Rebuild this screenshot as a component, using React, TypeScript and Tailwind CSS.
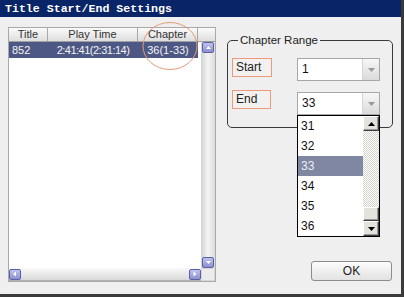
import React from "react";

const font = { fontFamily: '"Liberation Sans", Arial, sans-serif' };

function BlueBtn({ dir }: { dir: "up" | "down" | "left" | "right" }) {
  const pts: Record<string, string> = {
    up: "1,4 3.5,1 6,4",
    down: "1,1 3.5,4 6,1",
    left: "4,0.5 1,3 4,5.5",
    right: "1.5,0.5 4.5,3 1.5,5.5",
  };
  const w = dir === "up" || dir === "down" ? 7 : 6;
  const h = dir === "up" || dir === "down" ? 5 : 6;
  return (
    <div className="w-[12px] h-[11px] rounded-[2px] border border-[#5a60a3] bg-linear-to-b from-[#c0c3ee] to-[#8b90d0] flex items-center justify-center shrink-0">
      <svg width={w} height={h} viewBox={`0 0 ${w} ${h}`}>
        <polygon points={pts[dir]} fill="#ffffff" />
      </svg>
    </div>
  );
}

function ClassicBtn({ dir }: { dir: "up" | "down" }) {
  return (
    <div className="h-[15px] w-full bg-[#e4e2dc] border-r border-b border-[#404040] border-t border-l border-t-white border-l-white shadow-[inset_-1px_-1px_#9a9a9a] flex items-center justify-center">
      <svg width="7" height="4" viewBox="0 0 7 4">
        {dir === "up" ? (
          <polygon points="3.5,0 7,4 0,4" fill="#000" />
        ) : (
          <polygon points="0,0 7,0 3.5,4" fill="#000" />
        )}
      </svg>
    </div>
  );
}

function Combo({ value, children }: { value: string; children?: React.ReactNode }) {
  return (
    <div className="relative w-[83px] h-[23px] border border-[#a7a7a7] bg-white flex">
      <div className="flex-1 pl-[4px] text-[12px] leading-[21px] text-[#111]">{value}</div>
      <div className="w-[17px] h-full border-l border-[#d6d6d6] bg-linear-to-b from-[#f7f7f7] to-[#dadada] flex items-center justify-center">
        <svg width="7" height="4" viewBox="0 0 7 4">
          <polygon points="0,0 7,0 3.5,4" fill="#9a9a9a" />
        </svg>
      </div>
      {children}
    </div>
  );
}

export default function App() {
  const items = ["31", "32", "33", "34", "35", "36"];
  return (
    <div
      className="w-[404px] h-[297px] flex flex-col bg-[#efefef] border-r-[3px] border-b-[3px] border-[#3a3a3a] overflow-hidden"
      style={font}
    >
      {/* title bar */}
      <div
        className="h-[17px] bg-[#0a2468] text-white font-bold text-[11.6px] leading-[17px] pl-[5px] whitespace-nowrap"
        style={{ fontFamily: '"Liberation Mono", "Courier New", monospace' }}
      >
        Title Start/End Settings
      </div>

      {/* body */}
      <div className="relative flex-1 flex items-start">
        {/* list view */}
        <div className="ml-[8px] mt-[10px] w-[208px] h-[255px] border border-[#a9a9a9] flex flex-col bg-white">
          <div className="h-[14px] flex bg-linear-to-b from-[#fbfbfb] to-[#dedede] border-b border-[#a0a0a0] text-[11px] leading-[13px] text-[#333]">
            <div className="w-[39px] text-center border-r border-[#a8a8a8]">Title</div>
            <div className="w-[90px] text-center border-r border-[#a8a8a8]">Play Time</div>
            <div className="w-[60px] text-center border-r border-[#a8a8a8]">Chapter</div>
            <div className="flex-1" />
          </div>
          <div className="flex-1 flex min-h-0">
            <div className="flex-1 bg-white">
              <div className="h-[16px] flex bg-[#4e5884] text-[#f4f4f4] text-[11px] leading-[16px] w-[189px]">
                <div className="w-[39px] pl-[3px]">852</div>
                <div className="w-[90px] text-center tracking-[-0.5px]">2:41:41(2:31:14)</div>
                <div className="w-[60px] text-center">36(1-33)</div>
              </div>
            </div>
            <div className="w-[14px] flex flex-col items-center bg-linear-to-r from-[#d2d2d2] via-[#f4f4f4] to-[#dcdcdc]">
              <BlueBtn dir="up" />
              <div className="flex-1" />
              <BlueBtn dir="down" />
            </div>
          </div>
          <div className="h-[13px] flex">
            <div className="flex-1 flex items-center bg-linear-to-b from-[#f9f9f9] to-[#d9d9d9] border-b border-[#b0b0b0]">
              <BlueBtn dir="left" />
              <div className="flex-1" />
              <BlueBtn dir="right" />
            </div>
            <div className="w-[14px] bg-[#ececec] border border-[#d8d8d8]" />
          </div>
        </div>

        {/* orange circle annotation */}
        <svg className="absolute left-[142px] top-[5px]" width="58" height="50" viewBox="0 0 58 50">
          <ellipse cx="28" cy="24" rx="27" ry="23.5" fill="none" stroke="#e59a78" strokeWidth="1" />
        </svg>

        {/* right side */}
        <div className="ml-[11px] mt-[23px] w-[166px] flex flex-col">
          <div className="relative h-[88px] border border-[#3a3a3a] rounded-[5px]">
            <div className="absolute -top-[7px] left-[10px] bg-[#efefef] px-[2px] text-[11.5px] leading-[13px] text-[#222]">
              Chapter Range
            </div>
            <div className="mt-[17px] ml-[4px] flex items-start">
              <div className="w-[40px] h-[19px] border border-[#ee9a78] bg-[#f3f1ef] text-[12px] leading-[17px] pl-[3px] text-[#222]">
                Start
              </div>
              <div className="ml-[25px]">
                <Combo value="1" />
              </div>
            </div>
            <div className="mt-[9px] ml-[4px] flex items-start">
              <div className="w-[39px] h-[19px] border border-[#ee9a78] bg-[#f3f1ef] text-[12px] leading-[17px] pl-[3px] text-[#222]">
                End
              </div>
              <div className="ml-[26px] mt-[2px]">
                <Combo value="33">
                  <div className="absolute left-[-1px] top-[22px] z-10 w-[83px] h-[122px] border border-black bg-white flex">
                    <div className="flex-1 flex flex-col">
                      {items.map((n) => (
                        <div
                          key={n}
                          className={
                            "h-[20px] pl-[3px] text-[12px] leading-[20px] " +
                            (n === "33" ? "bg-[#7f87a3] text-[#eceef4]" : "text-[#111]")
                          }
                        >
                          {n}
                        </div>
                      ))}
                    </div>
                    <div className="w-[16px] flex flex-col">
                      <ClassicBtn dir="up" />
                      <div className="flex-1 flex flex-col justify-end bg-[repeating-conic-gradient(#ffffff_0_25%,#d6d3cc_0_50%)] bg-[length:2px_2px]">
                        <div className="h-[14px] bg-[#e4e2dc] border-r border-b border-[#404040] border-t border-l border-t-white border-l-white shadow-[inset_-1px_-1px_#9a9a9a]" />
                      </div>
                      <ClassicBtn dir="down" />
                    </div>
                  </div>
                </Combo>
              </div>
            </div>
          </div>

          <div className="mt-[133px] ml-[84px] w-[81px] h-[20px] border border-[#8c8c8c] rounded-[3px] bg-linear-to-b from-[#fcfcfc] to-[#e2e2e2] text-[12px] leading-[18px] text-center text-[#222]">
            OK
          </div>
        </div>
      </div>
    </div>
  );
}
